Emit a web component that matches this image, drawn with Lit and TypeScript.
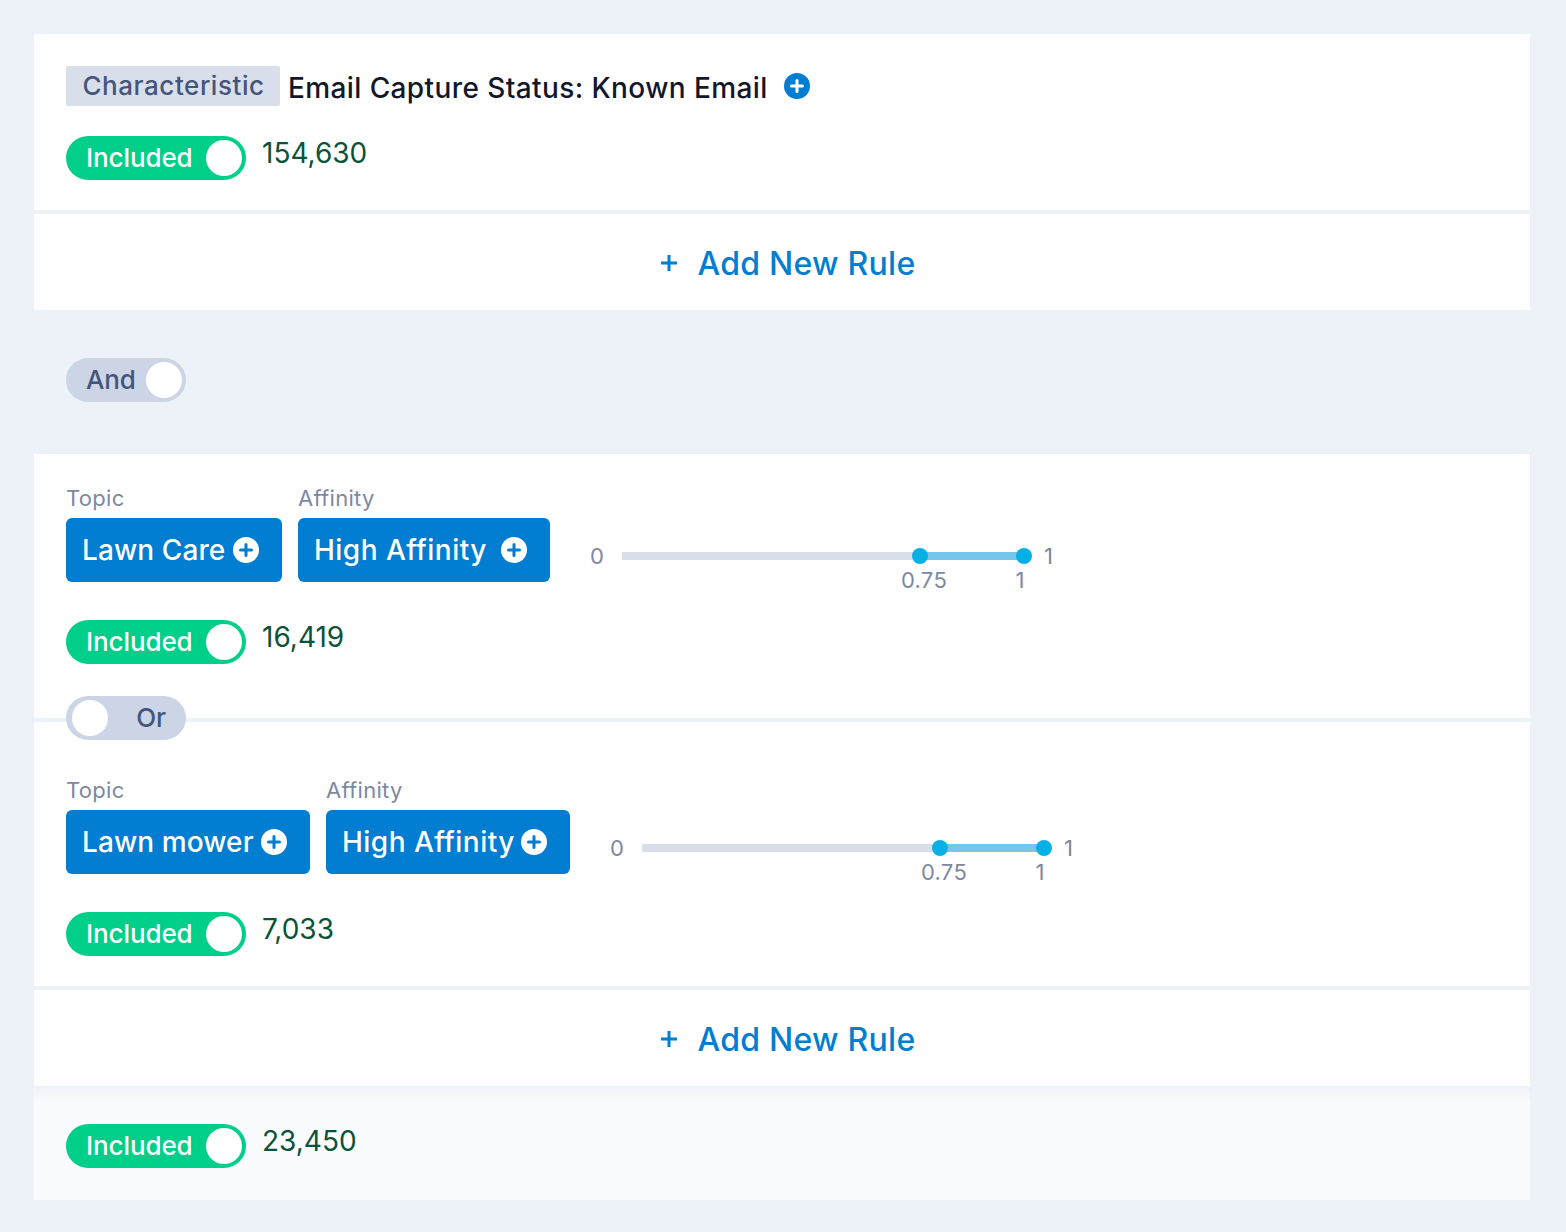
import { LitElement, html, css, svg } from 'lit';
import { customElement } from 'lit/decorators.js';

const plusIcon = (size: number, bg: string, fg: string) => html`
  <svg class="plus" width=${size} height=${size} viewBox="0 0 26 26">
    ${svg`<circle cx="13" cy="13" r="13" fill=${bg}></circle>
    <path d="M13 7.5v11M7.5 13h11" stroke=${fg} stroke-width="3" stroke-linecap="round"></path>`}
  </svg>
`;

@customElement('app-root')
export class AppRoot extends LitElement {
  static styles = css`
    :host {
      display: block;
      min-height: 1232px;
      background: #edf1f8;
      font-family: Inter, "Noto Sans", sans-serif;
      font-variant-ligatures: none;
      box-sizing: border-box;
      padding: 34px 36px 32px 34px;
    }
    .block {
      background: #fff;
    }
    .sep {
      border-top: 4px solid #edf1f8;
    }
    .char-rule {
      height: 176px;
      box-sizing: border-box;
      padding: 32px 32px 0;
    }
    .title-row {
      display: flex;
      align-items: center;
      height: 40px;
      margin-bottom: 30px;
    }
    .tag {
      height: 40px;
      line-height: 39px;
      box-sizing: border-box;
      width: 214px;
      padding-left: 1px;
      text-align: center;
      background: #d8dfeb;
      border-radius: 2px;
      color: #45557a;
      font-size: 26px;
      font-weight: 500;
      letter-spacing: 0.55px;
    }
    .title {
      margin-left: 9px;
      margin-right: 15px;
      margin-top: 4px;
      font-size: 28px;
      font-weight: 500;
      letter-spacing: 0.4px;
      color: #12172b;
      transform: translateX(-1px);
    }
    .status-row {
      display: flex;
      align-items: flex-start;
      gap: 16px;
    }
    .count {
      font-size: 28px;
      line-height: 34px;
      color: #0a5338;
    }
    .toggle {
      display: flex;
      align-items: center;
      box-sizing: border-box;
      height: 44px;
      border-radius: 22px;
      padding: 0 4px;
      font-size: 26px;
      font-weight: 500;
      letter-spacing: -0.1px;
    }
    .toggle .txt {
      margin-top: -2px;
    }
    .toggle .knob {
      width: 36px;
      height: 36px;
      border-radius: 50%;
      background: #fff;
      flex: none;
    }
    .toggle.on {
      width: 180px;
      background: #00cf8a;
      color: #fff;
      justify-content: space-between;
      padding-left: 20px;
    }
    .toggle.logic {
      width: 120px;
      background: #cbd5e6;
      color: #45557a;
      justify-content: space-between;
    }
    .toggle.logic.and {
      padding-left: 20px;
    }
    .toggle.logic.or {
      padding-left: 6px;
      padding-right: 20px;
    }
    .add {
      height: 100px;
      display: flex;
      align-items: center;
      justify-content: center;
      gap: 20px;
      color: #017dd1;
      font-size: 32px;
      font-weight: 500;
      letter-spacing: 0.25px;
      padding-left: 11px;
      padding-top: 2px;
      box-sizing: border-box;
    }
    .logic-row {
      padding: 48px 32px 52px;
    }
    .rule {
      position: relative;
      box-sizing: border-box;
      padding: 32px 32px 0;
      height: 264px;
    }
    .rule.second {
      padding-top: 56px;
      height: 268px;
    }
    .or-over {
      position: absolute;
      left: 32px;
      top: -26px;
    }
    .fields {
      display: flex;
      gap: 16px;
      margin-bottom: 38px;
    }
    .label {
      height: 32px;
      line-height: 25px;
      font-size: 22px;
      letter-spacing: 0.3px;
      color: #7d88a3;
    }
    .chip {
      display: flex;
      align-items: center;
      justify-content: space-between;
      box-sizing: border-box;
      height: 64px;
      padding: 0 23px 0 16px;
      background: #017dd1;
      border-radius: 6px;
      color: #fff;
      font-size: 28px;
      font-weight: 500;
      letter-spacing: 0.47px;
    }
    .chip.lawn {
      letter-spacing: 0.1px;
    }
    .range {
      display: flex;
      align-items: center;
      align-self: flex-end;
      height: 64px;
      margin-left: 24px;
      font-size: 22px;
      letter-spacing: 0.3px;
      color: #7d88a3;
    }
    .range .lo {
      width: 32px;
      margin-top: 12px;
      box-sizing: border-box;
    }
    .track {
      position: relative;
      width: 402px;
      height: 8px;
      margin-top: 12px;
      background: #d8dfeb;
    }
    .fill {
      position: absolute;
      top: 0;
      bottom: 0;
      left: 298px;
      right: 0;
      background: #75c6e8;
    }
    .handle {
      position: absolute;
      top: -4px;
      width: 16px;
      height: 16px;
      margin-left: -8px;
      border-radius: 50%;
      background: #05b0e5;
    }
    .tick {
      position: absolute;
      top: 14px;
      line-height: 28px;
      transform: translateX(-50%);
    }
    .range .hi {
      margin-top: 12px;
      margin-left: 20px;
    }
    .footer {
      position: relative;
      height: 114px;
      box-sizing: border-box;
      padding: 38px 32px 0;
      background: linear-gradient(#eef1f6, #fafbfe 16px);
    }
  `;

  private status(count: string) {
    return html`
      <div class="status-row">
        <div class="toggle on"><span class="txt">Included</span><span class="knob"></span></div>
        <div class="count">${count}</div>
      </div>
    `;
  }

  private field(label: string, value: string, width: number, variant = '') {
    return html`
      <div>
        <div class="label">${label}</div>
        <div class="chip ${variant}" style="width: ${width}px">
          <span>${value}</span>${plusIcon(26, '#fff', '#017dd1')}
        </div>
      </div>
    `;
  }

  private range() {
    return html`
      <div class="range">
        <span class="lo">0</span>
        <div class="track">
          <div class="fill"></div>
          <span class="handle" style="left: 298px"></span>
          <span class="handle" style="left: 402px"></span>
          <span class="tick" style="left: 302px">0.75</span>
          <span class="tick" style="left: 398px">1</span>
        </div>
        <span class="hi">1</span>
      </div>
    `;
  }

  private addRule() {
    return html`
      <div class="block sep add">
        <svg width="18" height="18" viewBox="0 0 18 18">
          <path d="M9 1v16M1 9h16" stroke="#017dd1" stroke-width="3"></path>
        </svg>
        <span>Add New Rule</span>
      </div>
    `;
  }

  render() {
    return html`
      <div class="block char-rule">
        <div class="title-row">
          <div class="tag">Characteristic</div>
          <div class="title">Email Capture Status: Known Email</div>
          ${plusIcon(26, '#017dd1', '#fff')}
        </div>
        ${this.status('154,630')}
      </div>
      ${this.addRule()}

      <div class="logic-row">
        <div class="toggle logic and"><span class="txt">And</span><span class="knob"></span></div>
      </div>

      <div class="block rule">
        <div class="fields">
          ${this.field('Topic', 'Lawn Care', 216, 'lawn')}
          ${this.field('Affinity', 'High Affinity', 252)}
          ${this.range()}
        </div>
        ${this.status('16,419')}
      </div>
      <div class="block sep rule second">
        <div class="toggle logic or or-over"><span class="knob"></span><span class="txt">Or</span></div>
        <div class="fields">
          ${this.field('Topic', 'Lawn mower', 244, 'lawn')}
          ${this.field('Affinity', 'High Affinity', 244)}
          ${this.range()}
        </div>
        ${this.status('7,033')}
      </div>
      ${this.addRule()}
      <div class="footer">${this.status('23,450')}</div>
    `;
  }
}
